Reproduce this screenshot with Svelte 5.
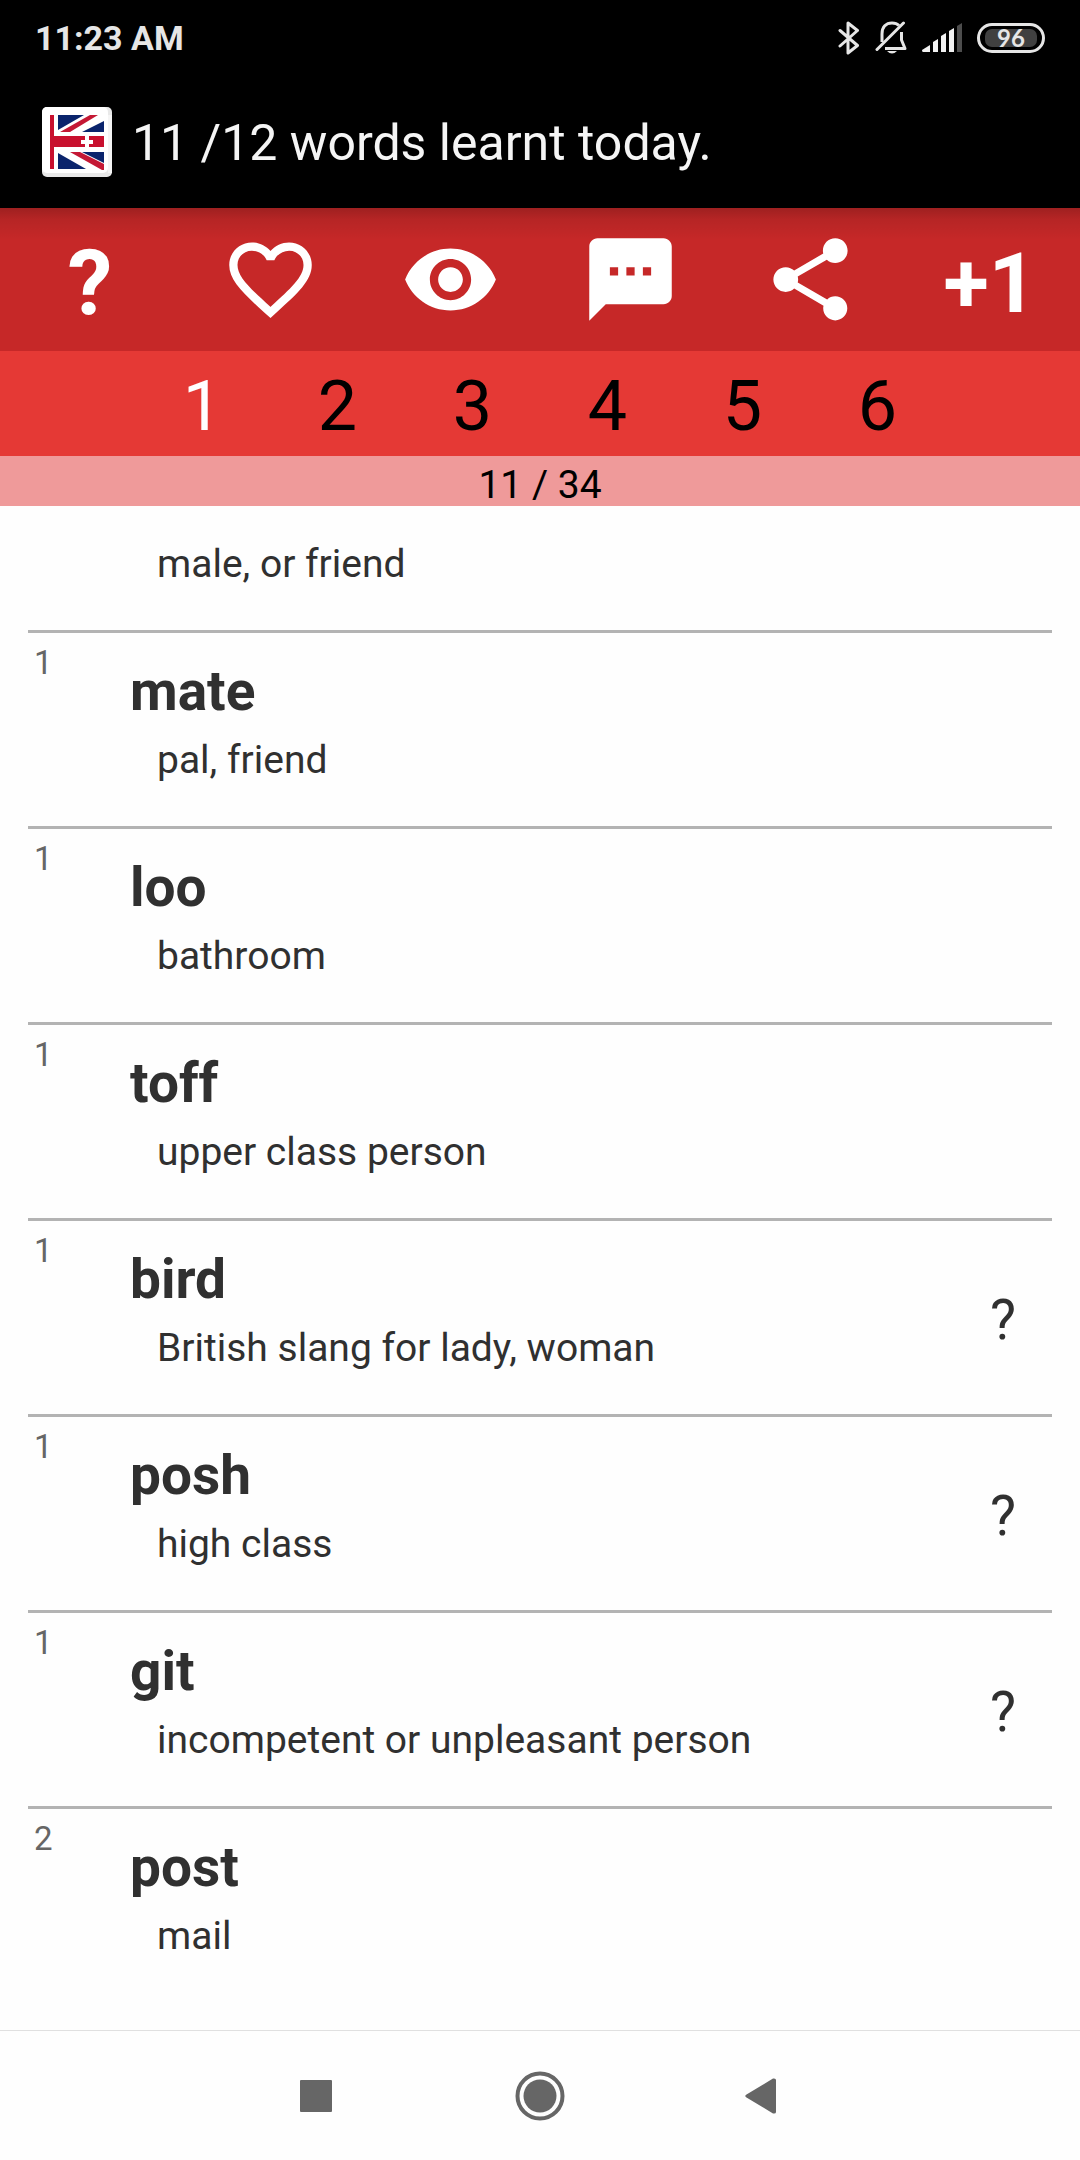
<script lang="ts">
  let lesson = $state(1);
  const lessons = [1, 2, 3, 4, 5, 6];

  const words = [
    { level: '', word: '', meaning: 'male, or friend', unsure: false },
    { level: '1', word: 'mate', meaning: 'pal, friend', unsure: false },
    { level: '1', word: 'loo', meaning: 'bathroom', unsure: false },
    { level: '1', word: 'toff', meaning: 'upper class person', unsure: false },
    { level: '1', word: 'bird', meaning: 'British slang for lady, woman', unsure: true },
    { level: '1', word: 'posh', meaning: 'high class', unsure: true },
    { level: '1', word: 'git', meaning: 'incompetent or unpleasant person', unsure: true },
    { level: '2', word: 'post', meaning: 'mail', unsure: false }
  ];
</script>

<div class="screen">
  <div class="status">
    <span class="time">11:23 AM</span>
    <div class="indicators">
      <svg width="22" height="36" viewBox="0 0 22 36" fill="none" stroke="#e6e6e6" stroke-width="3" stroke-linejoin="round" stroke-linecap="round" aria-hidden="true">
        <path d="M2 10.500L19.500 25.500L10 33V3L19.500 10.500L2 26" />
      </svg>
      <svg width="32" height="36" viewBox="0 0 32 36" aria-hidden="true">
        <path d="M7 22V14C7 7 11 3 17 3C20 3 22.500 4 24 5.500M26.500 12V20L30 28.500H10" fill="none" stroke="#e6e6e6" stroke-width="3" stroke-linejoin="round" />
        <path d="M2 29.500L28.500 3" stroke="#e6e6e6" stroke-width="3" stroke-linecap="round" />
        <path d="M12 31H22Q17 36 12 31Z" fill="#e6e6e6" />
      </svg>
      <svg width="40" height="30" viewBox="0 0 40 30" fill="#f2f2f2" aria-hidden="true">
        <path d="M0 27L8 22V29H1Q0 29 0 27Z" />
        <path d="M11 19L16 16V29H11Z" />
        <path d="M19 13L24 10V29H19Z" />
        <path d="M27 8L32 5V29H27Z" />
        <path d="M35 3L40 0V29H35Z" fill="#4d4d4d" />
      </svg>
      <span class="battery"><span>96</span></span>
    </div>
  </div>

  <header>
    <svg class="logo" width="70" height="70" viewBox="0 0 70 70" aria-hidden="true">
      <rect width="70" height="70" rx="5" fill="#e9e9e9" />
      <rect width="66" height="66" rx="5" fill="#fff" />
      <rect x="66" y="8" width="4" height="58" fill="#f5f5f5" />
      <path d="M16 8H42L16 23ZM62 14V25H40ZM16 46L44 62H16ZM40 45H62V56Z" fill="#0a246c" />
      <path d="M18 25L48 8H56L28 25ZM28 45H38L62 57V63H60Z" fill="#c41834" />
      <path d="M8 8H12V29H62V40H12V62H8Z" fill="#c8102e" />
      <path d="M45 29V41M39 35H51" stroke="#fff" stroke-width="4" />
    </svg>
    <h1>11 /12 words learnt today.</h1>
  </header>

  <nav class="tools" aria-label="Actions">
    <button class="help">?</button>
    <button aria-label="Favourite">
      <svg viewBox="0 0 24 24" fill="#fff"><path d="M16.500 3c-1.740 0-3.410.81-4.500 2.090C10.910 3.810 9.240 3 7.500 3 4.420 3 2 5.420 2 8.500c0 3.780 3.400 6.860 8.550 11.540L12 21.350l1.450-1.320C18.600 15.360 22 12.280 22 8.500 22 5.420 19.580 3 16.500 3zm-4.400 15.550l-.1.1-.1-.1C7.140 14.240 4 11.390 4 8.500 4 6.500 5.500 5 7.500 5c1.540 0 3.040.99 3.570 2.360h1.870C13.460 5.990 14.960 5 16.500 5c2 0 3.500 1.500 3.500 3.500 0 2.890-3.140 5.740-7.900 10.050z" /></svg>
    </button>
    <button aria-label="Show">
      <svg viewBox="0 0 24 24" fill="#fff"><path d="M12 4.500C7 4.500 2.730 7.610 1 12c1.730 4.390 6 7.500 11 7.500s9.270-3.110 11-7.500c-1.730-4.390-6-7.500-11-7.500zM12 17c-2.760 0-5-2.240-5-5s2.240-5 5-5 5 2.240 5 5-2.240 5-5 5zm0-8c-1.660 0-3 1.340-3 3s1.340 3 3 3 3-1.340 3-3-1.340-3-3-3z" /></svg>
    </button>
    <button aria-label="Comment">
      <svg viewBox="0 0 24 24" fill="#fff"><path d="M20 2H4c-1.100 0-1.990.9-1.990 2L2 22l4-4h14c1.100 0 2-.9 2-2V4c0-1.100-.9-2-2-2zM9 11H7V9h2v2zm4 0h-2V9h2v2zm4 0h-2V9h2v2z" /></svg>
    </button>
    <button aria-label="Share">
      <svg viewBox="0 0 24 24" fill="#fff"><path d="M18 16.080c-.76 0-1.440.3-1.960.77L8.910 12.700c.05-.23.09-.46.09-.7s-.04-.47-.09-.7l7.050-4.110c.54.5 1.250.81 2.040.81 1.660 0 3-1.340 3-3s-1.340-3-3-3-3 1.340-3 3c0 .24.04.47.09.7L8.040 9.810C7.500 9.310 6.790 9 6 9c-1.660 0-3 1.340-3 3s1.340 3 3 3c.79 0 1.500-.31 2.040-.81l7.120 4.160c-.05.21-.08.43-.08.65 0 1.610 1.310 2.920 2.920 2.920 1.610 0 2.920-1.310 2.920-2.920s-1.310-2.920-2.920-2.920z" /></svg>
    </button>
    <button class="plus">+1</button>
  </nav>

  <nav class="lessons" aria-label="Lessons">
    {#each lessons as n}
      <button class:active={n === lesson} onclick={() => (lesson = n)}>{n}</button>
    {/each}
  </nav>

  <div class="progress">11 / 34</div>

  <ul>
    {#each words as w}
      <li class:clipped={!w.word}>
        <span class="level">{w.level}</span>
        <div class="entry">
          {#if w.word}<h2>{w.word}</h2>{/if}
          <p>{w.meaning}</p>
        </div>
        {#if w.unsure}<span class="unsure">?</span>{/if}
      </li>
    {/each}
  </ul>

  <nav class="system" aria-label="System">
    <button aria-label="Recent apps">
      <svg width="32" height="32" viewBox="0 0 32 32"><rect width="32" height="32" rx="1" fill="#666" /></svg>
    </button>
    <button aria-label="Home">
      <svg width="50" height="50" viewBox="0 0 50 50"><circle cx="25" cy="25" r="22.500" fill="none" stroke="#666" stroke-width="4" /><circle cx="25" cy="25" r="16.500" fill="#666" /></svg>
    </button>
    <button aria-label="Back">
      <svg width="38" height="36" viewBox="0 0 38 36"><path d="M1.500 16.500L28 .5Q31 0 31 2V34Q31 36 28 35.500L1.500 19.500Q-1 18 1.500 16.500Z" fill="#666" /></svg>
    </button>
  </nav>
</div>

<style>
  :global(body) {
    background: #fefefe;
  }
  .screen {
    display: flex;
    flex-direction: column;
    min-height: 100vh;
    font-family: Roboto, sans-serif;
    color: #303030;
  }
  h1, h2, p, ul {
    margin: 0;
    padding: 0;
  }
  button {
    display: flex;
    align-items: center;
    justify-content: center;
    margin: 0;
    padding: 0;
    border: 0;
    background: none;
    color: inherit;
    font: inherit;
    cursor: pointer;
  }
  .status {
    display: flex;
    align-items: center;
    justify-content: space-between;
    height: 76px;
    padding: 0 35px;
    background: #000;
    color: #e6e6e6;
  }
  .time {
    font-size: 34px;
    font-weight: 700;
  }
  .indicators {
    display: flex;
    align-items: center;
    gap: 15px;
  }
  .battery {
    display: flex;
    box-sizing: border-box;
    width: 68px;
    height: 30px;
    padding: 3px 5px;
    border: 3px solid #e6e6e6;
    border-radius: 15px;
  }
  .battery span {
    flex: 1;
    border-radius: 7px;
    background: #404040;
    font: 700 24px/18px Lato, sans-serif;
    text-align: center;
  }
  header {
    display: flex;
    align-items: center;
    gap: 20px;
    height: 132px;
    padding: 0 42px;
    background: #000;
    color: #f5f5f5;
  }
  h1 {
    padding-top: 2px;
    font-size: 50px;
    font-weight: 400;
  }
  .tools {
    display: grid;
    grid-template-columns: repeat(6, 1fr);
    height: 143px;
    background: linear-gradient(rgba(0, 0, 0, 0.200), rgba(0, 0, 0, 0.080) 12px, rgba(0, 0, 0, 0) 32px) #c62828;
    color: #fff;
    font-weight: 700;
  }
  .tools svg {
    width: 99px;
    height: 99px;
  }
  .help,
  .plus {
    padding-top: 8px;
  }
  .help {
    font-size: 90px;
  }
  .plus {
    font-size: 83px;
  }
  .lessons {
    display: flex;
    justify-content: center;
    height: 105px;
    background: #e53935;
    color: #000;
    font-size: 70px;
  }
  .lessons button {
    flex: 0 0 12.5%;
    padding-top: 5px;
  }
  .lessons .active {
    color: #fff;
  }
  .progress {
    height: 50px;
    background: #ef9a9a;
    color: #000;
    font-size: 39px;
    line-height: 58px;
    text-align: center;
  }
  ul {
    flex: 1;
    padding: 0 28px;
    list-style: none;
  }
  li {
    display: flex;
    box-sizing: border-box;
    height: 196px;
    border-bottom: 3px solid #b3b3b3;
  }
  li:last-child {
    border-bottom: 0;
  }
  li.clipped {
    height: 127px;
  }
  .level {
    width: 102px;
    padding: 10px 6px;
    box-sizing: border-box;
    color: #666;
    font-size: 33px;
    line-height: 40px;
  }
  .entry {
    flex: 1;
    padding-top: 23px;
  }
  .clipped .entry {
    padding-top: 33px;
  }
  h2 {
    padding-bottom: 9px;
    font-size: 55px;
    font-weight: 700;
    line-height: 70px;
  }
  p {
    padding-left: 27px;
    font-size: 39px;
    line-height: 50px;
  }
  .unsure {
    width: 98px;
    padding-top: 64px;
    box-sizing: border-box;
    text-align: center;
    font-size: 55px;
    line-height: 70px;
  }
  .system {
    display: flex;
    align-items: center;
    justify-content: center;
    height: 129px;
    border-top: 1px solid #e0e0e0;
  }
  .system button {
    width: 224px;
    height: 100%;
  }
</style>
